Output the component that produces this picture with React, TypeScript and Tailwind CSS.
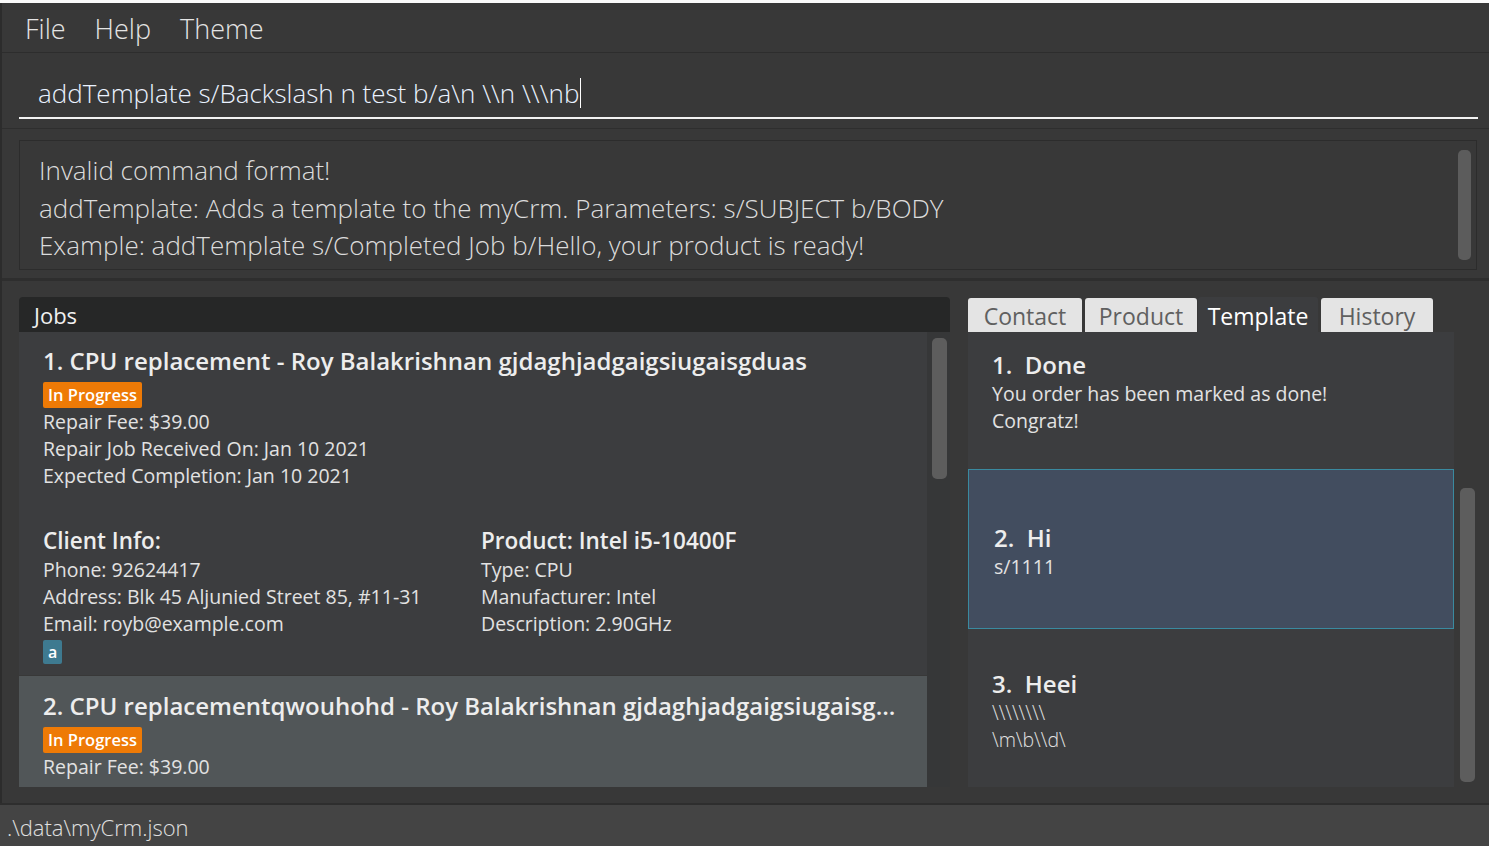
import React from 'react'

const jobLine = 'text-[19.5px] leading-[27px] text-[#e2e2e2]'
const cardTitle = 'text-[24px] font-semibold leading-[30px] text-[#ededed]'

function Badge({ label }: { label: string }) {
  return (
    <div className="mt-[6px] inline-flex h-[26px] items-center rounded-[2px] bg-[#ee7a06] px-[5px] text-[16.5px] font-semibold text-white">
      {label}
    </div>
  )
}

function JobCard() {
  return (
    <div className="bg-[#3c3d3f] pl-[24px] pr-4 pt-[14px] pb-[11px]">
      <div className={`whitespace-nowrap ${cardTitle}`}>
        1. CPU replacement - Roy Balakrishnan gjdaghjadgaigsiugaisgduas
      </div>
      <Badge label="In Progress" />
      <div className={jobLine}>Repair Fee: $39.00</div>
      <div className={jobLine}>Repair Job Received On: Jan 10 2021</div>
      <div className={jobLine}>Expected Completion: Jan 10 2021</div>
      <div className="mt-[37px] grid grid-cols-[438px_1fr]">
        <div>
          <div className="text-[22.5px] font-semibold leading-[30px] text-[#ededed]">Client Info:</div>
          <div className={jobLine}>Phone: 92624417</div>
          <div className={jobLine}>Address: Blk 45 Aljunied Street 85, #11-31</div>
          <div className={jobLine}>Email: royb@example.com</div>
          <div className="mt-[3px] inline-flex h-[24px] items-center rounded-[2px] bg-[#3e7a90] px-[5px] text-[16px] font-semibold text-white">
            a
          </div>
        </div>
        <div>
          <div className="text-[22.5px] font-semibold leading-[30px] text-[#ededed]">Product: Intel i5-10400F</div>
          <div className={jobLine}>Type: CPU</div>
          <div className={jobLine}>Manufacturer: Intel</div>
          <div className={jobLine}>Description: 2.90GHz</div>
        </div>
      </div>
    </div>
  )
}

function JobCardTwo() {
  return (
    <div className="mt-px h-[120px] bg-[#515658] pl-[24px] pr-[30px] pt-[15px]">
      <div className={`truncate ${cardTitle}`}>
        2. CPU replacementqwouhohd - Roy Balakrishnan gjdaghjadgaigsiugaisgduasqwe
      </div>
      <Badge label="In Progress" />
      <div className={jobLine}>Repair Fee: $39.00</div>
    </div>
  )
}

const tabs = [
  { name: 'Contact', cls: 'w-[114px]' },
  { name: 'Product', cls: 'ml-[3px] w-[112px]' },
  { name: 'Template', cls: 'ml-px w-[120px]' },
  { name: 'History', cls: 'ml-[3px] w-[112px]' },
]

export default function App() {
  return (
    <div className="flex h-[846px] w-[1489px] flex-col overflow-hidden bg-[#383838] font-['Open_Sans',sans-serif]">
      <div className="h-[3px] shrink-0 bg-[#fafafa]" />
      <div className="flex min-h-0 flex-1 flex-col border-l-2 border-[#2c2c2c]">
        {/* menu */}
        <div className="flex h-[50px] shrink-0 items-center gap-[29px] border-b border-[#2d2d2d] pl-[23px] pt-[4px] text-[27px] font-light text-[#e4e4e4]">
          <span>File</span>
          <span>Help</span>
          <span>Theme</span>
        </div>

        {/* command box */}
        <div className="shrink-0 border-b border-[#2e2e2e] pl-[17px] pr-[11px] pt-[14px] pb-[9px]">
          <div className="flex h-[52px] items-center border-b-2 border-[#f2f2f2] pl-[19px] pt-[2px] text-[26px] font-light text-[#eaf2ff]">
            <span>addTemplate s/Backslash n test b/a\n \\n \\\nb</span>
            <span className="ml-px h-[30px] w-px bg-white" />
          </div>
        </div>

        {/* result */}
        <div className="ml-[17px] mr-[12px] mt-[11px] flex h-[130px] shrink-0 border border-[#2c2c2c] bg-[#383838]">
          <div className="flex-1 pl-[19px] pt-[11px] text-[26px] font-light leading-[37.5px] text-[#dcdcdc]">
            <div>Invalid command format!</div>
            <div>addTemplate: Adds a template to the myCrm. Parameters: s/SUBJECT b/BODY</div>
            <div>Example: addTemplate s/Completed Job b/Hello, your product is ready!</div>
          </div>
          <div className="w-[20px] py-[9px] pl-[2px]">
            <div className="h-full w-[13px] rounded-[5px] bg-[#5c5c5c]" />
          </div>
        </div>

        <div className="mt-[8px] h-[3px] shrink-0 bg-[#2e2e2e]" />

        {/* main */}
        <div className="flex min-h-0 flex-1 gap-[18px] pl-[17px] pr-[12px] pt-[16px] pb-[16px]">
          <div className="flex w-[931px] shrink-0 flex-col overflow-hidden">
            <div className="flex h-[35px] shrink-0 items-center rounded-t-[4px] bg-[#262727] pl-[15px] pt-[2px] text-[22px] text-[#f0f0f0]">
              Jobs
            </div>
            <div className="flex min-h-0 flex-1 overflow-hidden">
              <div className="flex-1 overflow-hidden">
                <JobCard />
                <JobCardTwo />
              </div>
              <div className="w-[23px] bg-[#363738] pl-[5px] pt-[6px]">
                <div className="h-[141px] w-[15px] rounded-[5px] bg-[#5d5d5d]" />
              </div>
            </div>
          </div>

          <div className="flex w-[509px] shrink-0 flex-col">
            <div className="flex h-[35px] shrink-0 items-end">
              {tabs.map((t) =>
                t.name === 'Template' ? (
                  <div
                    key={t.name}
                    className={`flex h-[35px] items-center justify-center rounded-t-[3px] bg-[#3c3d3f] pt-[3px] text-[23px] text-white ${t.cls}`}
                  >
                    {t.name}
                  </div>
                ) : (
                  <div
                    key={t.name}
                    className={`flex h-[34px] items-center justify-center rounded-t-[3px] bg-[#e4e4e4] pt-[3px] text-[23px] text-[#606060] ${t.cls}`}
                  >
                    {t.name}
                  </div>
                )
              )}
            </div>
            <div className="flex min-h-0 flex-1 overflow-hidden">
              <div className="w-[486px] overflow-hidden bg-[#3c3d3f]">
                <div className="h-[137px] pl-[24px] pt-[18px]">
                  <div className={`whitespace-pre ${cardTitle}`}>1.  Done</div>
                  <div className={jobLine}>You order has been marked as done!</div>
                  <div className={jobLine}>Congratz!</div>
                </div>
                <div className="flex h-[160px] flex-col justify-center border border-[#3a8aa0] bg-[#424d5f] pl-[25px] pt-[5px]">
                  <div className={`whitespace-pre ${cardTitle}`}>2.  Hi</div>
                  <div className={jobLine}>s/1111</div>
                </div>
                <div className="h-[160px] pl-[24px] pt-[40px]">
                  <div className={`whitespace-pre ${cardTitle}`}>3.  Heei</div>
                  <div className="text-[19.5px] font-light leading-[27px] text-[#e2e2e2]">{'\\\\\\\\\\\\\\\\'}</div>
                  <div className="text-[19.5px] font-light leading-[27px] text-[#e2e2e2]">{'\\m\\b\\\\d\\'}</div>
                </div>
              </div>
              <div className="w-[23px] pl-[6px] pt-[156px] pb-[5px]">
                <div className="h-full w-[15px] rounded-[5px] bg-[#5d5d5d]" />
              </div>
            </div>
          </div>
        </div>
      </div>

      {/* status bar */}
      <div className="flex h-[43px] shrink-0 items-center border-t-2 border-[#2e2e2e] bg-[#444444] pl-[7px] pt-[3px] text-[22px] font-light text-[#e0e0e0]">
        .\data\myCrm.json
      </div>
    </div>
  )
}
